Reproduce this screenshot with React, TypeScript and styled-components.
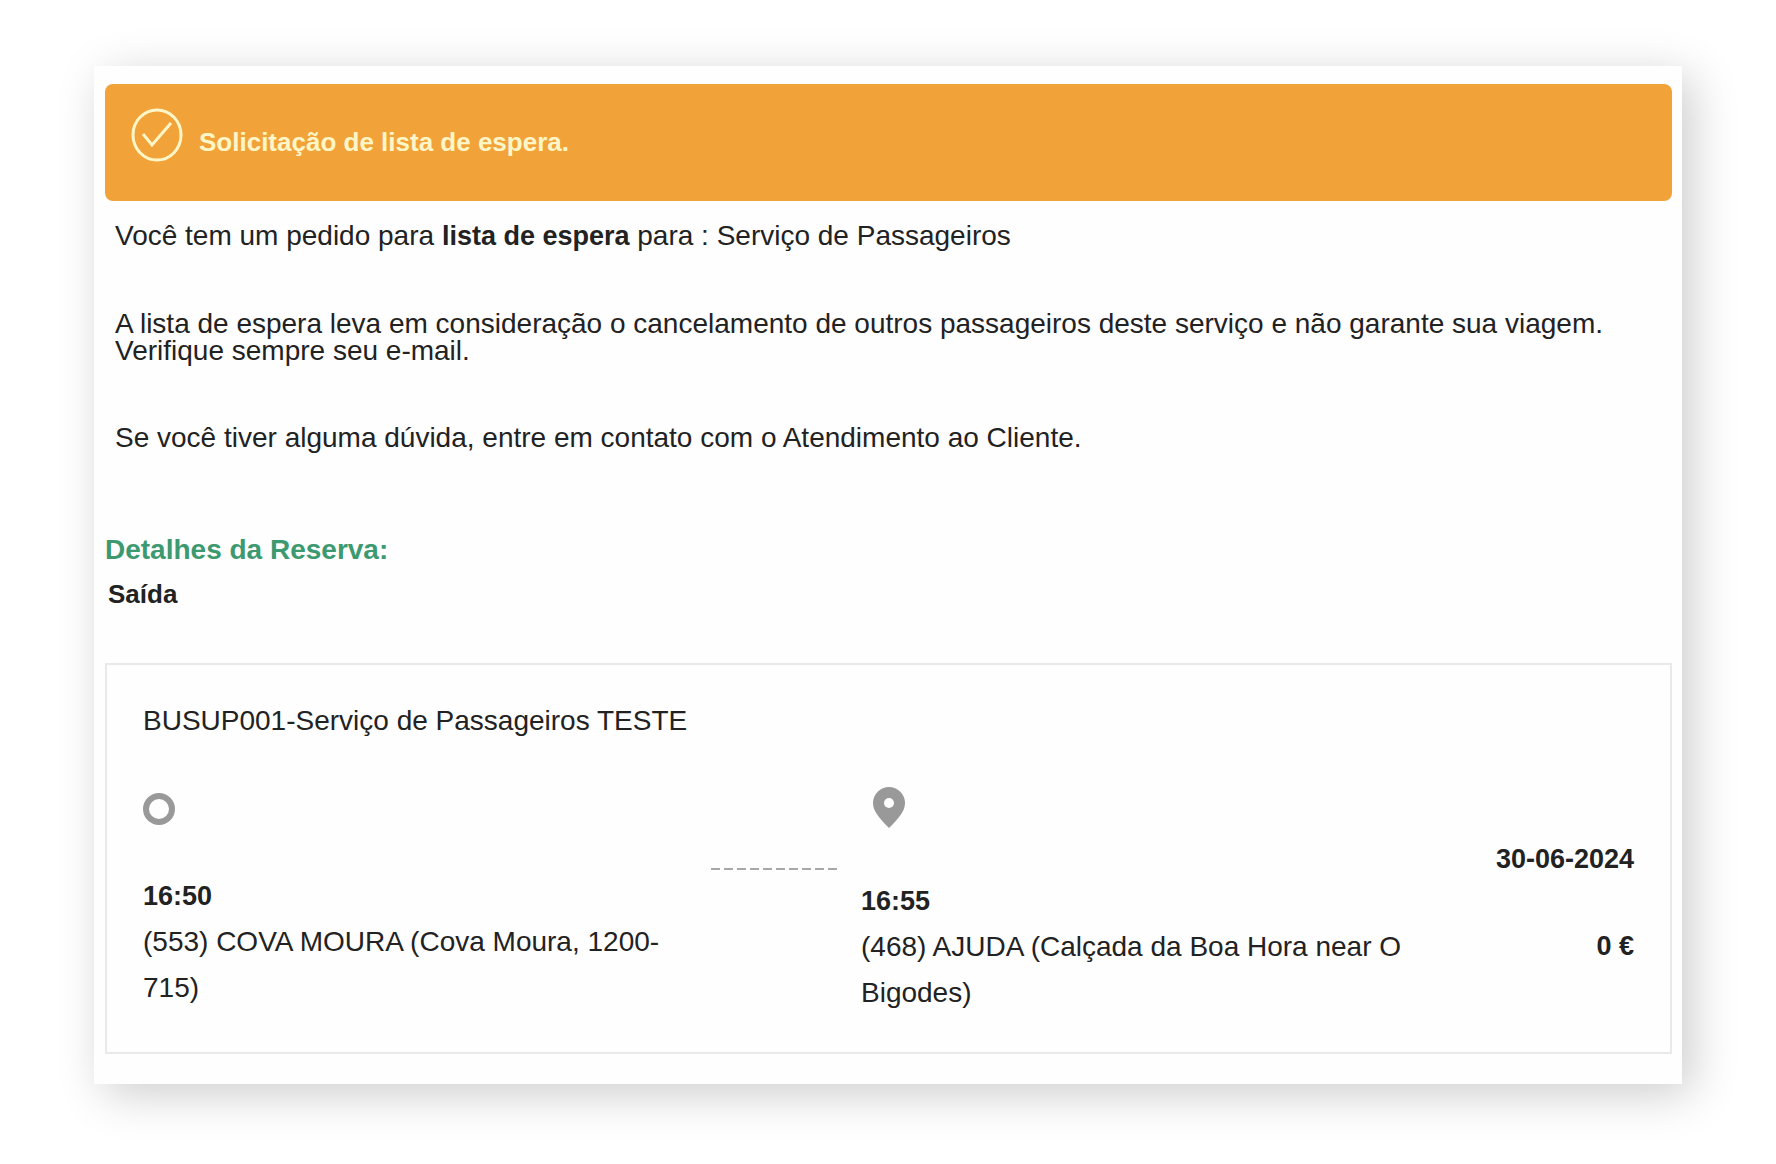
import React from "react";
import styled, { createGlobalStyle } from "styled-components";

const GlobalStyle = createGlobalStyle`
  *, *::before, *::after { box-sizing: border-box; }
  body {
    margin: 0;
    background: #fff;
    color: #222;
    font-family: "Liberation Sans", Arial, Helvetica, sans-serif;
    font-size: 28px;
    line-height: 27px;
  }
  p, h1, h2, h3 { margin: 0; font-size: inherit; }
  strong { font-size: 27px; }
`;

const Page = styled.div`
  padding: 66px 94px 80px;
`;

const Card = styled.main`
  padding: 18px 10px 30px 11px;
  background: #fefefe;
  box-shadow: 10px 10px 44px rgba(0, 0, 0, 0.2);
`;

const Banner = styled.header`
  display: flex;
  align-items: center;
  gap: 16px;
  min-height: 117px;
  padding: 24px 26px;
  border-radius: 8px;
  background: #f1a339;
  color: #fff6c8;
`;

const BannerIcon = styled.svg`
  flex: none;
  align-self: flex-start;
  width: 52px;
  height: 54px;
`;

const BannerTitle = styled.h1`
  font-size: 26px;
  font-weight: 700;
`;

const Message = styled.section`
  display: flex;
  flex-direction: column;
  gap: 60px;
  padding: 21px 10px 85px;
`;

const SectionTitle = styled.h2`
  color: #3d9970;
  font-weight: 700;
`;

const Direction = styled.h3`
  padding: 18px 3px 55px;
  font-size: 26px;
  font-weight: 700;
`;

const Trip = styled.section`
  padding: 42px 36px 36px;
  border: 2px solid #e9e9e9;
`;

const Route = styled.div`
  display: grid;
  grid-template-columns: 568fr 130fr 573fr 220fr;
  align-items: start;
  padding-top: 49px;
  line-height: 46px;
`;

const Stop = styled.div<{ $gap: number }>`
  display: flex;
  flex-direction: column;
  gap: ${({ $gap }) => $gap}px;
`;

const Origin = styled(Stop)`
  padding-right: 20px;
`;

const Destination = styled(Stop)`
  padding-left: 20px;
`;

const Time = styled.time`
  display: block;
  font-size: 27px;
  font-weight: 700;
`;

const Connector = styled.div`
  height: 2px;
  margin-top: 85px;
  background: repeating-linear-gradient(90deg, #a8a8a8 0 9px, transparent 9px 13px);
`;

const Summary = styled.div`
  display: flex;
  flex-direction: column;
  gap: 41px;
  padding-top: 53px;
  font-size: 27px;
  font-weight: 700;
  text-align: right;
  white-space: nowrap;
`;

export default function App() {
  return (
    <>
      <GlobalStyle />
      <Page>
        <Card>
          <Banner>
            <BannerIcon viewBox="0 0 52 54" fill="none" stroke="currentColor" aria-hidden="true">
              <ellipse cx="26" cy="27" rx="24" ry="25" strokeWidth="3" />
              <path d="M12 26 L21 37 L40 15" strokeWidth="3" />
            </BannerIcon>
            <BannerTitle>Solicitação de lista de espera.</BannerTitle>
          </Banner>
          <Message>
            <p>
              Você tem um pedido para <strong>lista de espera</strong> para : Serviço de Passageiros
            </p>
            <p>
              A lista de espera leva em consideração o cancelamento de outros passageiros deste
              serviço e não garante sua viagem. Verifique sempre seu e-mail.
            </p>
            <p>Se você tiver alguma dúvida, entre em contato com o Atendimento ao Cliente.</p>
          </Message>
          <SectionTitle>Detalhes da Reserva:</SectionTitle>
          <Direction>Saída</Direction>
          <Trip>
            <p>BUSUP001-Serviço de Passageiros TESTE</p>
            <Route>
              <Origin $gap={41}>
                <svg width="32" height="49" viewBox="0 0 32 49" fill="none" aria-hidden="true">
                  <circle cx="16" cy="26" r="13" stroke="#999" strokeWidth="6" />
                </svg>
                <div>
                  <Time>16:50</Time>
                  <p>(553) COVA MOURA (Cova Moura, 1200-715)</p>
                </div>
              </Origin>
              <Connector />
              <Destination $gap={46}>
                <svg width="56" height="49" viewBox="0 0 56 49" aria-hidden="true">
                  <path
                    d="M28 4a16 16 0 0 0-16 16c0 8 6 15 16 25c10-10 16-17 16-25a16 16 0 0 0-16-16z"
                    fill="#999"
                  />
                  <circle cx="28" cy="20" r="5" fill="#fefefe" />
                </svg>
                <div>
                  <Time>16:55</Time>
                  <p>(468) AJUDA (Calçada da Boa Hora near O Bigodes)</p>
                </div>
              </Destination>
              <Summary>
                <Time>30-06-2024</Time>
                <span>0 €</span>
              </Summary>
            </Route>
          </Trip>
        </Card>
      </Page>
    </>
  );
}
